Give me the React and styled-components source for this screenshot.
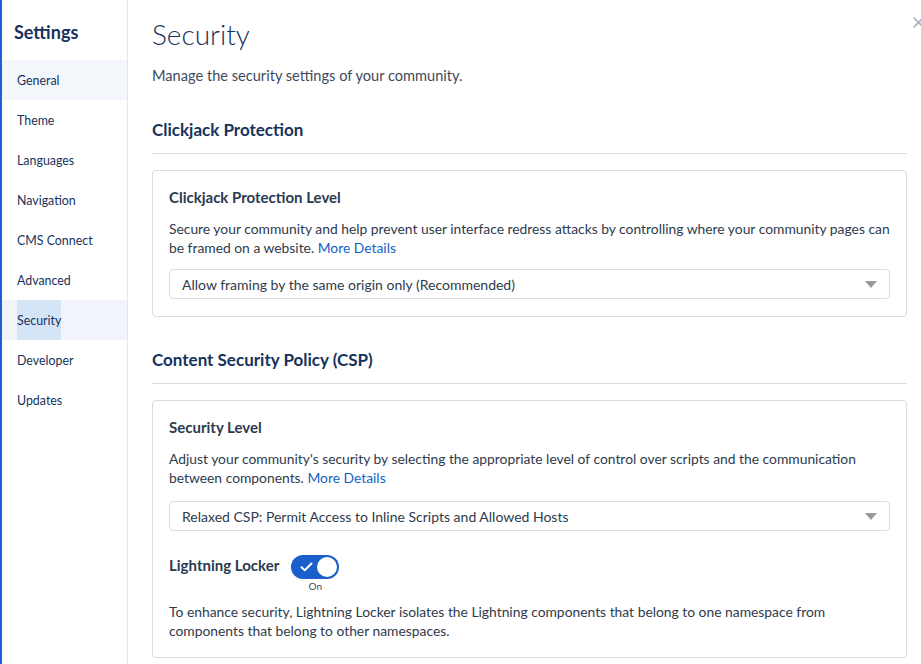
import styled, { createGlobalStyle } from "styled-components";

const GlobalStyle = createGlobalStyle`
  html, body {
    margin: 0;
    padding: 0;
    background: #fff;
  }
  body {
    font-family: Lato, "Open Sans", sans-serif;
    color: #16325c;
  }
  * {
    box-sizing: border-box;
  }
`;

const Page = styled.div`
  display: flex;
  width: 921px;
  height: 664px;
  overflow: hidden;
  border-left: 2px solid #1b62d1;
  position: relative;
`;

const Sidebar = styled.nav`
  width: 126px;
  flex-shrink: 0;
  border-right: 1px solid #e2e5ea;
  display: flex;
  flex-direction: column;
  padding-top: 20px;
`;

const SideTitle = styled.h1`
  margin: 0 0 16px 12px;
  font-size: 18px;
  font-weight: 700;
  color: #16325c;
  line-height: 24px;
`;

const NavItem = styled.div`
  height: 40px;
  display: flex;
  align-items: center;
  padding-left: 15px;
  font-size: 12.4px;
  color: #16325c;
  background: ${(p) => (p.$active ? "#f1f5fb" : p.$hover ? "#f3f6fa" : "transparent")};
`;

const NavLabel = styled.span`
  height: 40px;
  display: flex;
  align-items: center;
  background: ${(p) => (p.$active ? "#d6e4f8" : "transparent")};
`;

const Main = styled.main`
  flex: 1;
  padding: 16px 14px 0 24px;
`;

const Title = styled.h1`
  margin: 0;
  font-size: 28px;
  font-weight: 300;
  line-height: 36px;
  color: #16325c;
`;

const Subtitle = styled.p`
  margin: 14px 0 0;
  font-size: 14.6px;
  line-height: 20px;
  color: #3e4a5c;
`;

const SectionTitle = styled.h2`
  margin: ${(p) => p.$top || "32px"} 0 0;
  font-size: 17px;
  font-weight: 700;
  line-height: 22px;
  padding-bottom: 12px;
  border-bottom: 1px solid #dddbda;
  color: #16325c;
`;

const Card = styled.section`
  margin-top: 16px;
  border: 1px solid #dddbda;
  border-radius: 4px;
  padding: 15px 16px 17px 16px;
`;

const CardTitle = styled.h3`
  margin: 0;
  font-size: 15px;
  font-weight: 700;
  line-height: 22px;
  color: #2b3a4f;
`;

const Text = styled.p`
  margin: ${(p) => p.$top || "11px"} 0 0;
  font-size: 13.85px;
  line-height: 19px;
  color: #2f3b4c;
`;

const Link = styled.a`
  color: #1461c5;
  text-decoration: none;
`;

const Select = styled.div`
  margin-top: ${(p) => p.$top || "12px"};
  height: 30px;
  border: 1px solid #dddbda;
  border-radius: 4px;
  display: flex;
  align-items: center;
  justify-content: space-between;
  padding: 0 12px;
  font-size: 14px;
  color: #2f3b4c;
`;

const Caret = styled.span`
  width: 0;
  height: 0;
  border-left: 6px solid transparent;
  border-right: 6px solid transparent;
  border-top: 7px solid #9a9a9a;
`;

const ToggleRow = styled.div`
  margin-top: 24px;
  display: flex;
  align-items: flex-start;
  gap: 12px;
`;

const ToggleLabel = styled.span`
  font-size: 15px;
  font-weight: 700;
  line-height: 20px;
  color: #2b3a4f;
`;

const ToggleWrap = styled.div`
  display: flex;
  flex-direction: column;
  align-items: center;
`;

const Toggle = styled.div`
  width: 48px;
  height: 24px;
  border-radius: 12px;
  background: #1b5fcc;
  position: relative;
  display: flex;
  align-items: center;
  padding-left: 9px;
`;

const Knob = styled.span`
  position: absolute;
  right: 2px;
  top: 2px;
  width: 20px;
  height: 20px;
  border-radius: 50%;
  background: #fff;
`;

const ToggleState = styled.span`
  font-size: 10px;
  line-height: 14px;
  color: #3e4a5c;
`;

const Close = styled.svg`
  position: absolute;
  right: -3px;
  top: 17px;
`;

const navItems = [
  "General",
  "Theme",
  "Languages",
  "Navigation",
  "CMS Connect",
  "Advanced",
  "Security",
  "Developer",
  "Updates",
];

export default function App() {
  return (
    <>
      <GlobalStyle />
      <Page>
        <Sidebar>
          <SideTitle>Settings</SideTitle>
          {navItems.map((item) => (
            <NavItem
              key={item}
              $active={item === "Security"}
              $hover={item === "General"}
            >
              <NavLabel $active={item === "Security"}>{item}</NavLabel>
            </NavItem>
          ))}
        </Sidebar>
        <Main>
          <Title>Security</Title>
          <Subtitle>Manage the security settings of your community.</Subtitle>

          <SectionTitle $top="33px">Clickjack Protection</SectionTitle>
          <Card>
            <CardTitle>Clickjack Protection Level</CardTitle>
            <Text>
              Secure your community and help prevent user interface redress
              attacks by controlling where your community pages can be framed
              on a website. <Link href="#">More Details</Link>
            </Text>
            <Select>
              Allow framing by the same origin only (Recommended)
              <Caret />
            </Select>
          </Card>

          <SectionTitle>Content Security Policy (CSP)</SectionTitle>
          <Card>
            <CardTitle>Security Level</CardTitle>
            <Text>
              Adjust your community's security by selecting the appropriate
              level of control over scripts and the communication between
              components. <Link href="#">More Details</Link>
            </Text>
            <Select $top="14px">
              Relaxed CSP: Permit Access to Inline Scripts and Allowed Hosts
              <Caret />
            </Select>
            <ToggleRow>
              <ToggleLabel>Lightning Locker</ToggleLabel>
              <ToggleWrap>
                <Toggle>
                  <svg width="13" height="10" viewBox="0 0 13 10">
                    <path
                      d="M1.5 5.2 L4.8 8.2 L11.5 1.5"
                      fill="none"
                      stroke="#fff"
                      strokeWidth="2"
                      strokeLinecap="round"
                      strokeLinejoin="round"
                    />
                  </svg>
                  <Knob />
                </Toggle>
                <ToggleState>On</ToggleState>
              </ToggleWrap>
            </ToggleRow>
            <Text $top="9px">
              To enhance security, Lightning Locker isolates the Lightning
              components that belong to one namespace from components that
              belong to other namespaces.
            </Text>
          </Card>
        </Main>
        <Close width="11" height="11" viewBox="0 0 11 11">
          <path
            d="M1 1 L10 10 M10 1 L1 10"
            stroke="#a8b1bf"
            strokeWidth="1.6"
            strokeLinecap="round"
          />
        </Close>
      </Page>
    </>
  );
}
